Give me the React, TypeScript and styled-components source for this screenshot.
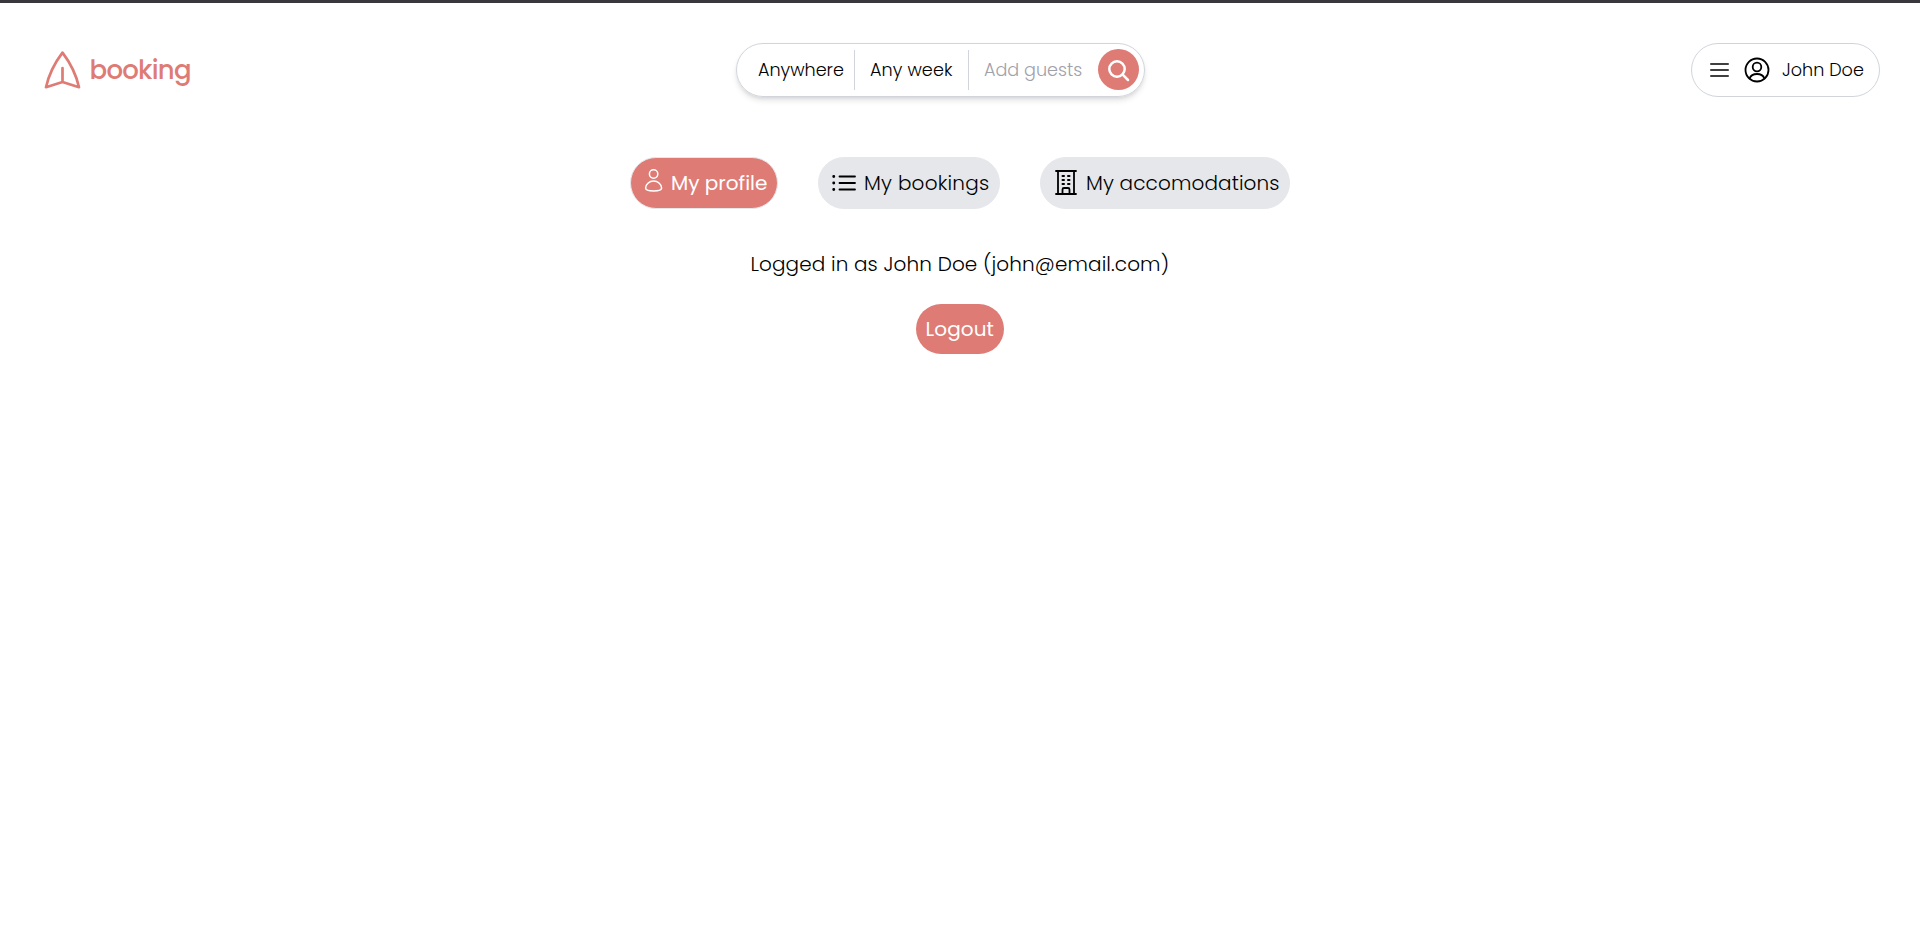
import React from "react";
import styled, { createGlobalStyle } from "styled-components";

const coral = "#de7b75";

const GlobalStyle = createGlobalStyle`
  *, *::before, *::after { box-sizing: border-box; }
  body {
    margin: 0;
    background: #fff;
    color: #000;
    font-family: Poppins, Inter, "Open Sans", sans-serif;
    font-weight: 300;
  }
  button { font: inherit; color: inherit; }
`;

const Page = styled.div`
  min-height: 926px;
  border-top: 3px solid #38373b;
  display: flex;
  flex-direction: column;
`;

const Header = styled.header`
  display: grid;
  grid-template-columns: 692px 409px 1fr;
  align-items: center;
  height: 54px;
  margin: 40px 40px 0 44px;
`;

const Brand = styled.a`
  display: flex;
  align-items: center;
  gap: 8.5px;
  color: ${coral};
`;

const Label = styled.span<{ $size?: number; $width: number; $spacing?: number; $weight?: number }>`
  flex: none;
  display: block;
  width: ${(p) => p.$width}px;
  font-size: ${(p) => p.$size ?? 20}px;
  font-weight: ${(p) => p.$weight ?? 300};
  letter-spacing: ${(p) => p.$spacing ?? 0}px;
  line-height: 28px;
  text-align: left;
  white-space: nowrap;
`;

const SearchBar = styled.div`
  display: flex;
  align-items: center;
  height: 54px;
  padding: 0 5.5px 1px 21px;
  border: 1px solid #d1d5db;
  border-radius: 27px;
  box-shadow: 0 4px 6px -1px rgba(0, 0, 0, 0.12), 0 2px 4px -2px rgba(0, 0, 0, 0.12);
`;

const Divider = styled.span<{ $before: number; $after: number }>`
  width: 1px;
  height: 40px;
  margin: 0 ${(p) => p.$after}px 0 ${(p) => p.$before}px;
  background: #d1d5db;
`;

const Muted = styled.span`
  color: #a1a1aa;
`;

const SearchButton = styled.button`
  display: grid;
  place-items: center;
  width: 41px;
  height: 41px;
  margin-left: auto;
  padding: 1px 0 0;
  border: 0;
  border-radius: 50%;
  background: ${coral};
  color: #fff;
`;

const Account = styled.button`
  justify-self: end;
  display: flex;
  align-items: center;
  width: 189px;
  height: 54px;
  padding: 0 0 0 18px;
  border: 1px solid #d1d5db;
  border-radius: 27px;
  background: #fff;
`;

const AccountIcon = styled.span`
  display: flex;
  margin: 0 12px 0 15px;
`;

const Tabs = styled.nav`
  display: flex;
  justify-content: center;
  gap: 40px;
  margin-top: 60px;
`;

const Tab = styled.button<{ $active?: boolean; $width: number; $gap: number; $inset: number }>`
  display: flex;
  align-items: center;
  gap: ${(p) => p.$gap}px;
  width: ${(p) => p.$width}px;
  height: 52px;
  padding: 0 0 1px ${(p) => p.$inset}px;
  border: 1px solid #e5e7eb;
  border-radius: 26px;
  background: ${(p) => (p.$active ? coral : "#e5e7eb")};
  color: ${(p) => (p.$active ? "#fff" : "#000")};
`;

const Profile = styled.main`
  display: flex;
  flex-direction: column;
  align-items: center;
  padding-top: 41px;
`;

const LogoutButton = styled.button`
  display: flex;
  align-items: center;
  justify-content: center;
  width: 88px;
  height: 50px;
  margin-top: 26px;
  padding: 0;
  border: 0;
  border-radius: 25px;
  background: ${coral};
  color: #fff;
`;

const Icon = styled.svg`
  flex: none;
  display: block;
  fill: none;
  stroke: currentColor;
  stroke-linecap: round;
  stroke-linejoin: round;
`;

const LogoIcon = () => (
  <Icon width="37" height="38" viewBox="0 0 37 38" strokeWidth="2.7">
    <path d="M18.5 1.6C11.7 10.5 5 23 2 36.2L18.5 31L35 36.2C32 23 25.3 10.5 18.5 1.6ZM18.5 31V17" />
  </Icon>
);

const SearchIcon = () => (
  <Icon width="23" height="23" viewBox="0 0 23 23" strokeWidth="2.5">
    <circle cx="10" cy="10" r="7.7" />
    <path d="M15.7 15.7L21 21" />
  </Icon>
);

const MenuIcon = () => (
  <Icon width="19" height="14" viewBox="0 0 19 14" strokeWidth="1.6">
    <path d="M.8 1H18.2M.8 7H18.2M.8 13H18.2" />
  </Icon>
);

const UserCircleIcon = () => (
  <Icon width="26" height="26" viewBox="0 0 26 26" strokeWidth="1.8">
    <circle cx="13" cy="13" r="11.5" />
    <circle cx="13" cy="10" r="4.3" />
    <path d="M5.5 21.5C7 17.8 10 17 13 17S19 17.8 20.5 21.5" />
  </Icon>
);

const PersonIcon = () => (
  <Icon width="19" height="28" viewBox="-.6 .5 19 28" strokeWidth="1.5">
    <circle cx="9" cy="5.5" r="4.2" />
    <path d="M9 12.6C13.5 12.6 17 16.2 17 19.5C17 21.9 13 22.5 9 22.5S1 21.9 1 19.5C1 16.2 4.5 12.6 9 12.6Z" />
  </Icon>
);

const ListIcon = () => (
  <Icon width="24" height="18" viewBox="0 0 24 18" strokeWidth="1.8">
    <path d="M7.5 2.5H23M7.5 9H23M7.5 15.5H23" />
    <path d="M1.7 2.5H1.8M1.7 9H1.8M1.7 15.5H1.8" strokeWidth="2.8" />
  </Icon>
);

const BuildingIcon = () => (
  <Icon width="22" height="26" viewBox="0 .5 22 26" strokeWidth="1.8">
    <path d="M1 1.5H21M1 24.5H21M3 1.5V24.5M19 1.5V24.5M7.5 24V20C7.5 19 8 18.5 9 18.5H13C14 18.5 14.5 19 14.5 20V24" />
    <path d="M7.5 6.5H9M13 6.5H14.5M7.5 10.5H9M13 10.5H14.5M7.5 14.5H9M13 14.5H14.5" strokeWidth="2" />
  </Icon>
);

export default function App() {
  return (
    <>
      <GlobalStyle />
      <Page>
        <Header>
          <Brand>
            <LogoIcon />
            <Label $size={26} $width={102} $weight={500} $spacing={-0.75}>booking</Label>
          </Brand>
          <SearchBar>
            <Label $size={17.6} $width={87}>Anywhere</Label>
            <Divider $before={9} $after={15} />
            <Label $size={17.6} $width={83} $spacing={0.1}>Any week</Label>
            <Divider $before={15} $after={15} />
            <Label $size={17.6} $width={99}><Muted>Add guests</Muted></Label>
            <SearchButton aria-label="Search"><SearchIcon /></SearchButton>
          </SearchBar>
          <Account>
            <MenuIcon />
            <AccountIcon><UserCircleIcon /></AccountIcon>
            <Label $size={17.6} $width={84}>John Doe</Label>
          </Account>
        </Header>
        <Tabs>
          <Tab $active $width={148} $gap={8} $inset={13}>
            <PersonIcon />
            <Label $width={97} $weight={400}>My profile</Label>
          </Tab>
          <Tab $width={182} $gap={8} $inset={13}>
            <ListIcon />
            <Label $width={125} $spacing={0.22}>My bookings</Label>
          </Tab>
          <Tab $width={250} $gap={9} $inset={14}>
            <BuildingIcon />
            <Label $width={193} $spacing={0.12}>My accomodations</Label>
          </Tab>
        </Tabs>
        <Profile>
          <Label $width={419} $spacing={0.11}>Logged in as John Doe (john@email.com)</Label>
          <LogoutButton>
            <Label $width={69} $weight={400} $spacing={0.1}>Logout</Label>
          </LogoutButton>
        </Profile>
      </Page>
    </>
  );
}
